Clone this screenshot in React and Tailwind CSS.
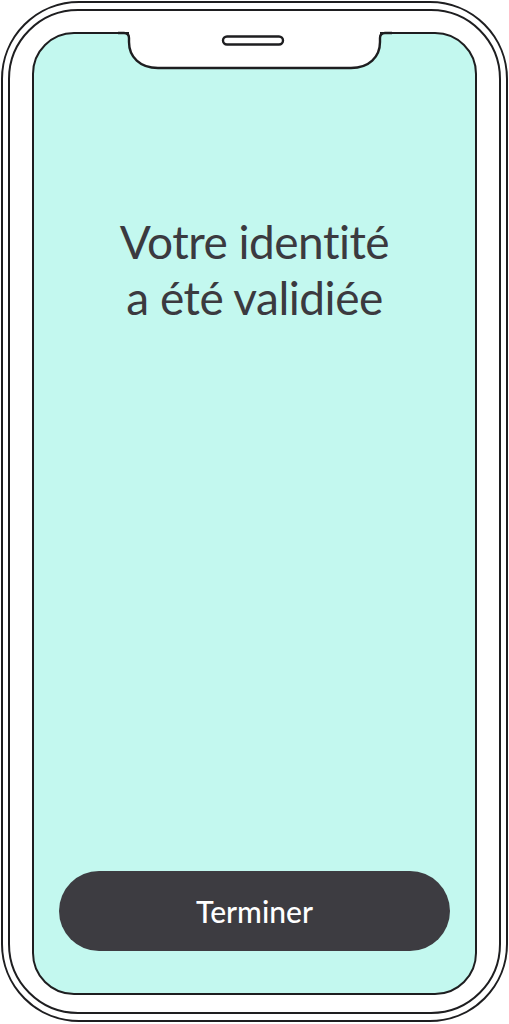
import React from "react";

const font = { fontFamily: "Lato, 'Noto Sans', sans-serif" };

const Notch = () => (
  <svg
    className="pointer-events-none absolute left-0 top-0"
    width="509"
    height="80"
    viewBox="0 0 509 80"
  >
    <path
      d="M127,31 L129,31 L129,42 C129,57 140,68 158,68 L351,68 C369,68 380,57 380,42 L380,31 Z"
      fill="#ffffff"
    />
    <path
      d="M118,33 L124,33 Q129,33 129,38 L129,42 C129,57 140,68 158,68 L351,68 C369,68 380,57 380,42 L380,38 Q380,33 385,33 L392,33"
      fill="none"
      stroke="#1e1e20"
      strokeWidth="2.4"
    />
    <rect x="223" y="36.5" width="60" height="8" rx="4" fill="#ffffff" stroke="#1e1e20" strokeWidth="2.4" />
  </svg>
);

export default function App() {
  return (
    <div className="relative h-[1024px] w-[509px] bg-white p-px" style={font}>
      <div className="h-[1021px] w-[507px] rounded-[78px] border-2 border-[#1e1e20] px-[5px] pt-[6px] pb-[6px]">
        <div className="flex h-full w-full flex-col rounded-[70px] border-2 border-[#1e1e20] px-[22px] pt-[21px] pb-[17px]">
          <div className="flex flex-1 flex-col items-center rounded-[42px] border-2 border-[#1e1e20] bg-[#c3f8ef] px-[25px] pb-[42px]">
            <h1 className="mt-[180px] text-center text-[46px] leading-[56px] font-normal tracking-[-0.5px] text-[#3b3a3f]">
              Votre identité
              <br />
              a été validiée
            </h1>
            <div className="flex-1" />
            <button className="flex h-[80px] w-full items-center justify-center rounded-full bg-[#3d3c41] text-[30px] font-medium text-white">
              Terminer
            </button>
          </div>
        </div>
      </div>
      <Notch />
    </div>
  );
}
